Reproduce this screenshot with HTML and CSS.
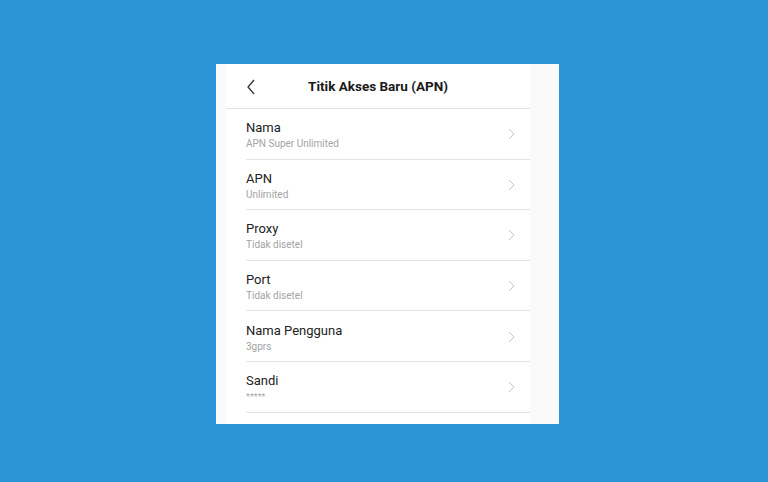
FILE: index.html
```html
<!DOCTYPE html>
<html lang="id">
<head>
    <meta charset="UTF-8">
    <meta name="viewport" content="width=device-width, initial-scale=1.0">
    <title>Titik Akses Baru (APN)</title>
    <link rel="stylesheet" href="styles.css">
</head>
<body>
    <div class="phone">
        <div class="panel">
            <div class="header">
                <svg class="back" width="10" height="16" viewBox="0 0 10 16">
                    <path d="M8 1 L2 8 L8 15" fill="none" stroke="#333" stroke-width="1.3"/>
                </svg>
                <h1>Titik Akses Baru (APN)</h1>
            </div>

            <div class="row">
                <div class="text">
                    <div class="label">Nama</div>
                    <div class="value">APN Super Unlimited</div>
                </div>
                <svg class="chev" width="7" height="12" viewBox="0 0 7 12"><path d="M1 1 L6 6 L1 11" fill="none" stroke="#c4c4c4" stroke-width="1"/></svg>
            </div>
            <div class="row">
                <div class="text">
                    <div class="label">APN</div>
                    <div class="value">Unlimited</div>
                </div>
                <svg class="chev" width="7" height="12" viewBox="0 0 7 12"><path d="M1 1 L6 6 L1 11" fill="none" stroke="#c4c4c4" stroke-width="1"/></svg>
            </div>
            <div class="row">
                <div class="text">
                    <div class="label">Proxy</div>
                    <div class="value">Tidak disetel</div>
                </div>
                <svg class="chev" width="7" height="12" viewBox="0 0 7 12"><path d="M1 1 L6 6 L1 11" fill="none" stroke="#c4c4c4" stroke-width="1"/></svg>
            </div>
            <div class="row">
                <div class="text">
                    <div class="label">Port</div>
                    <div class="value">Tidak disetel</div>
                </div>
                <svg class="chev" width="7" height="12" viewBox="0 0 7 12"><path d="M1 1 L6 6 L1 11" fill="none" stroke="#c4c4c4" stroke-width="1"/></svg>
            </div>
            <div class="row">
                <div class="text">
                    <div class="label">Nama Pengguna</div>
                    <div class="value">3gprs</div>
                </div>
                <svg class="chev" width="7" height="12" viewBox="0 0 7 12"><path d="M1 1 L6 6 L1 11" fill="none" stroke="#c4c4c4" stroke-width="1"/></svg>
            </div>
            <div class="row">
                <div class="text">
                    <div class="label">Sandi</div>
                    <div class="value stars">*****</div>
                </div>
                <svg class="chev" width="7" height="12" viewBox="0 0 7 12"><path d="M1 1 L6 6 L1 11" fill="none" stroke="#c4c4c4" stroke-width="1"/></svg>
            </div>
        </div>
    </div>
</body>
</html>
```

FILE: styles.css
```css
body {
    margin: 0;
    padding: 64px 0 0 216px;
    background-color: #2a96d8;
    font-family: Roboto, "Noto Sans", sans-serif;
    height: 482px;
    box-sizing: border-box;
}
.phone {
    width: 343px;
    height: 360px;
    background-color: #fafafa;
    padding-left: 10px;
    box-sizing: border-box;
    overflow: hidden;
}
.panel {
    width: 304px;
    height: 360px;
    background-color: #fff;
}
.header {
    position: relative;
    height: 44px;
    border-bottom: 1px solid #e4e4e4;
    display: flex;
    align-items: center;
    justify-content: center;
}
.header h1 {
    margin: 0;
    font-size: 13.5px;
    font-weight: 700;
    color: #1a1a1a;
}
.back {
    position: absolute;
    left: 20px;
    top: 15px;
}
.row {
    margin-left: 20px;
    height: 49.6px;
    border-bottom: 1px solid #e4e4e4;
    display: flex;
    align-items: center;
    justify-content: space-between;
    padding-right: 15px;
}
.text {
    padding-top: 3px;
}
.label {
    font-size: 13px;
    color: #222;
    line-height: 17px;
}
.value {
    font-size: 10px;
    color: #a4a4a4;
    line-height: 14px;
    margin-top: 1px;
}
.stars {
    font-size: 9px;
    color: #aaa;
    letter-spacing: 0;
}
.chev {
    margin-top: 1px;
}
```
